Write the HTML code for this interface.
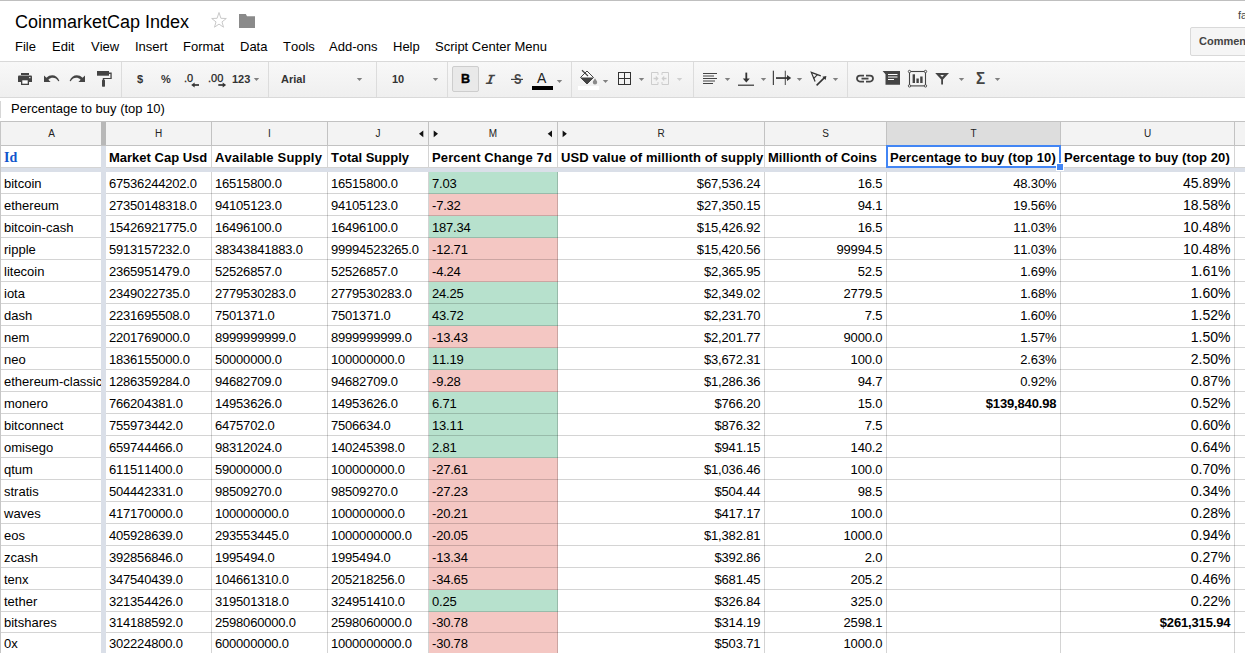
<!DOCTYPE html>
<html><head><meta charset="utf-8"><title>CoinmarketCap Index</title>
<style>
html,body{margin:0;padding:0;}
body{font-kerning:none;text-rendering:optimizeSpeed;width:1245px;height:653px;overflow:hidden;background:#fff;position:relative;font-family:"Liberation Sans",Arial,sans-serif;color:#000;}
div,span{box-sizing:border-box;}
.abs{position:absolute;}
#topline{position:absolute;left:0;top:0;width:1245px;height:1px;background:#bfbfbf;}
#title{position:absolute;left:15px;top:11px;font-size:18px;line-height:22px;white-space:nowrap;color:#000;}
.menu{position:absolute;top:39px;font-size:13px;line-height:16px;white-space:nowrap;color:#000;}
#toolbar{position:absolute;left:0;top:61px;width:1245px;height:37px;background:linear-gradient(#f8f8f8,#efefef);border-top:1px solid #d9d9d9;border-bottom:1px solid #d9d9d9;}
.sep{position:absolute;top:62px;width:1px;height:35px;background:#dcdcdc;}
.tb{position:absolute;white-space:nowrap;font-weight:bold;font-size:11px;color:#333;line-height:14px;}
.dd{position:absolute;width:0;height:0;border-left:2.6px solid transparent;border-right:2.6px solid transparent;border-top:3px solid #808080;}
#formula{position:absolute;left:11px;top:101px;font-size:13px;line-height:16px;white-space:nowrap;}
#grid{position:absolute;left:0;top:0;width:1245px;height:653px;}
.ch{position:absolute;top:122px;height:23px;background:#f3f3f3;text-align:center;font-size:10px;line-height:23px;color:#222;}
.ch.sel{background:#dddddd;}
.hc{position:absolute;top:146px;height:22px;font-size:13px;font-weight:bold;line-height:23px;padding-left:3px;white-space:nowrap;overflow:hidden;}
.hc.id{font-family:"Liberation Serif","Times New Roman",serif;color:#1155cc;font-size:14px;line-height:24px;}
.c{position:absolute;font-size:13px;white-space:nowrap;overflow:hidden;padding:0 3px;}
.c.r{text-align:right;}
.c.n{letter-spacing:-0.2px;}
.c.r{letter-spacing:-0.15px;}
.c.u{letter-spacing:0;}
.c.u{font-size:14px;}
.c.bb{letter-spacing:-0.15px;}
.c.r{padding-right:3.6px;}
.c.pos{background:#b7e1cd;}
.c.neg{background:#f4c7c3;}
.vl{position:absolute;top:122px;width:1px;height:531px;background:rgba(0,0,0,0.17);}
.hl{position:absolute;left:0;width:1245px;height:1px;background:rgba(0,0,0,0.17);}
</style></head><body>
<div id="topline"></div>
<div id="title">CoinmarketCap Index</div>
<div class="menu" style="left:15px">File</div>
<div class="menu" style="left:52px">Edit</div>
<div class="menu" style="left:91px">View</div>
<div class="menu" style="left:135px">Insert</div>
<div class="menu" style="left:183px">Format</div>
<div class="menu" style="left:240px">Data</div>
<div class="menu" style="left:283px">Tools</div>
<div class="menu" style="left:329px">Add-ons</div>
<div class="menu" style="left:393px">Help</div>
<div class="menu" style="left:435px">Script Center Menu</div>
<svg class="abs" style="left:210px;top:11px" width="18" height="18" viewBox="0 0 18 18"><path d="M9 1.5 L10.9 7.3 L16.3 7.5 L12 10.9 L13.5 16.2 L9 13.1 L4.5 16.2 L6 10.9 L1.7 7.5 L7.1 7.3 Z" fill="#fff" stroke="#c9c9c9" stroke-width="1"/></svg>
<svg class="abs" style="left:239px;top:14px" width="16" height="14" viewBox="0 0 16 14"><path d="M0 0 H6.8 L8 2.2 H16 V14 H0 Z" fill="#8a8a8a"/></svg>
<div class="abs" style="left:1238px;top:9px;font-size:11px;line-height:13px;color:#444;white-space:nowrap">fa</div>
<div class="abs" style="left:1190px;top:27px;width:80px;height:29px;border:1px solid #d9d9d9;border-radius:2px;background:#f5f5f5;font-size:11px;font-weight:bold;color:#444;line-height:27px;padding-left:8px;white-space:nowrap">Comments</div>
<div id="toolbar"></div>
<div class="sep" style="left:121px"></div>
<div class="sep" style="left:268px"></div>
<div class="sep" style="left:376px"></div>
<div class="sep" style="left:447px"></div>
<div class="sep" style="left:571px"></div>
<div class="sep" style="left:693px"></div>
<div class="sep" style="left:847px"></div>
<svg class="abs" style="left:0;top:62px" width="1245" height="34" viewBox="0 62 1245 34">
<g fill="#444">
<!-- print -->
<rect x="21" y="73" width="8" height="2"/>
<path d="M18 76.6 a1 1 0 0 1 1 -1 H31 a1 1 0 0 1 1 1 V82 H18 Z"/>
<rect x="21" y="79.5" width="8" height="5.5"/>
<rect x="22.3" y="80.3" width="5.4" height="3.4" fill="#fff"/>
<rect x="29.2" y="77" width="1.2" height="1.2" fill="#fff"/>
<!-- undo -->
<path d="M44 75.6 V82 H50.6 L48.4 79.7 C51.5 76.8 56 77.3 58.3 81.3 L59.4 80.9 C57.3 74.6 50.6 73.6 46.4 77.7 Z"/>
<!-- redo -->
<path d="M85 75.6 V82 H78.4 L80.6 79.7 C77.5 76.8 73 77.3 70.7 81.3 L69.6 80.9 C71.7 74.6 78.4 73.6 82.6 77.7 Z"/>
<!-- paint format -->
<rect x="97" y="71" width="12" height="4.7"/>
<path d="M109 72.6 H111.7 V79.1 H104.2 V80 H102.8 V77.9 H110.4 V73.9 H109 Z"/>
<rect x="102" y="79.7" width="3" height="7" rx="0.6"/>
</g>
<!-- decimal arrows -->
<g stroke="#333" stroke-width="1.7" fill="#333">
<path d="M194 85 H199" fill="none"/><path d="M191.2 85 L194.6 82.4 V87.6 Z" stroke="none"/>
<path d="M218.3 85 H223.3" fill="none"/><path d="M226.1 85 L222.7 82.4 V87.6 Z" stroke="none"/>
</g>
<!-- text color bar -->
<rect x="532" y="86" width="21" height="4" fill="#000"/>
<path d="M511 79.4 H523" stroke="#444" stroke-width="1.2"/>
<!-- fill color -->
<rect x="578" y="86" width="21" height="4" fill="#fff"/>
<path d="M587 71 L593.5 77.5 L587 84 L580.5 77.5 Z" fill="#fff" stroke="#444" stroke-width="1"/>
<path d="M580.6 77.5 H593.4 L587 84 Z" fill="#444"/>
<path d="M582 70.2 L588 76" stroke="#444" stroke-width="1.2"/>
<path d="M595 78.2 C596.4 80.3 597.2 81.3 597.2 82.3 A2.2 2.2 0 0 1 592.8 82.3 C592.8 81.3 593.6 80.3 595 78.2 Z" fill="#8a8a8a"/>
<!-- borders -->
<g stroke="#333" stroke-width="1" fill="none">
<rect x="618.5" y="72.5" width="12" height="12"/>
<path d="M624.5 72.5 V84.5 M618.5 78.5 H630.5"/>
</g>
<!-- merge (disabled) -->
<g stroke="#cdcdcd" stroke-width="1" fill="none">
<path d="M658 72.5 H651.5 V84.5 H658 M658 72.5 V75 M658 82 V84.5"/>
<path d="M662 72.5 H668.5 V84.5 H662 M662 72.5 V75 M662 82 V84.5"/>
<path d="M653.5 78.5 H656.5 M666.5 78.5 H663.5" stroke-width="1.4"/>
</g>
<path d="M655.8 75.8 L658.6 78.5 L655.8 81.2 Z M664.2 75.8 L661.4 78.5 L664.2 81.2 Z" fill="#cdcdcd"/>
<!-- align -->
<g stroke="#444" stroke-width="1" fill="none">
<path d="M703 73.5 H717 M703 76 H714 M703 78.5 H717 M703 81 H715 M703 83.5 H713"/>
</g>
<!-- valign bottom -->
<g fill="#333">
<rect x="738" y="84.6" width="16" height="1.2"/>
<rect x="745.4" y="72.6" width="1.8" height="7"/>
<path d="M742.8 78.6 H749.8 L746.3 82.4 Z"/>
</g>
<!-- wrap -->
<g fill="#333">
<rect x="772.8" y="70.7" width="1.1" height="14.3"/>
<rect x="784.8" y="70.7" width="0.9" height="14.3"/>
<rect x="776" y="77.2" width="12" height="1.7"/>
<path d="M787 75 L791.2 78 L787 81 Z"/>
</g>
<!-- rotate -->
<g stroke="#333" fill="none">
<path d="M820.8 75.9 L811.3 72.4 L815.1 81.6" stroke-width="1.2" stroke-linejoin="miter"/>
<path d="M817.5 74.7 L813.8 78.4" stroke-width="1.1"/>
<path d="M816.6 85.3 L824.5 77.7" stroke-width="1.6"/>
</g>
<path d="M826.4 75.9 L822.3 76.7 L825.6 80.1 Z" fill="#333"/>
<!-- link -->
<g stroke="#444" stroke-width="1.8" fill="none">
<path d="M864 75.6 H860 a3 3 0 0 0 0 6 H864"/>
<path d="M866 75.6 H870 a3 3 0 0 1 0 6 H866"/>
<path d="M861.5 78.6 H868.5"/>
</g>
<!-- comment -->
<path d="M882.6 71 H900 V84.8 H885.5 V74.2 Z" fill="#444"/>
<g stroke="#fff" stroke-width="1"><path d="M888 74.5 H897.5 M888 77 H897.5 M888 79.5 H894"/></g>
<!-- chart -->
<rect x="909.5" y="71.5" width="16" height="14.4" fill="none" stroke="#444" stroke-width="1.1"/>
<g fill="#f5f5f5" stroke="#444" stroke-width="0.9">
<circle cx="909.5" cy="71.5" r="1.2"/><circle cx="925.5" cy="71.5" r="1.2"/><circle cx="909.5" cy="85.9" r="1.2"/><circle cx="925.5" cy="85.9" r="1.2"/>
</g>
<g fill="#444"><rect x="912.6" y="74.3" width="2.4" height="8.7"/><rect x="916.4" y="78.5" width="2.4" height="4.5"/><rect x="920.2" y="76.5" width="2.4" height="6.5"/></g>
<!-- filter -->
<path d="M935.2 73 H949 L943 79.6 V84.6 H941.2 V79.6 Z" fill="#444"/>
<path d="M940.2 74.9 H944 L942.1 76.9 Z" fill="#f3f3f3"/>
<!-- dropdown arrows -->
<path d="M253.8 78 h5.4 l-2.7 3 z" fill="#808080"/>
<path d="M356.8 78 h5.4 l-2.7 3 z" fill="#808080"/>
<path d="M432.8 78 h5.4 l-2.7 3 z" fill="#808080"/>
<path d="M556.8 80 h5.4 l-2.7 3 z" fill="#808080"/>
<path d="M602.8 80 h5.4 l-2.7 3 z" fill="#808080"/>
<path d="M638.8 78 h5.4 l-2.7 3 z" fill="#808080"/>
<path d="M676.8 78 h5.4 l-2.7 3 z" fill="#cfcfcf"/>
<path d="M724.8 78 h5.4 l-2.7 3 z" fill="#808080"/>
<path d="M760.8 78 h5.4 l-2.7 3 z" fill="#808080"/>
<path d="M796.8 78 h5.4 l-2.7 3 z" fill="#808080"/>
<path d="M832.8 78 h5.4 l-2.7 3 z" fill="#808080"/>
<path d="M958.8 78 h5.4 l-2.7 3 z" fill="#808080"/>
<path d="M994.8 78 h5.4 l-2.7 3 z" fill="#808080"/>
</svg>
<div class="tb" style="left:137px;top:72px">$</div>
<div class="tb" style="left:161px;top:72px">%</div>
<div class="tb" style="left:184px;top:71px;font-weight:normal;color:#222;-webkit-text-stroke:0.25px #222">.0</div>
<div class="tb" style="left:208px;top:71px;font-weight:normal;color:#222;-webkit-text-stroke:0.25px #222">.00</div>
<div class="tb" style="left:232px;top:72px">123</div>
<div class="tb" style="left:281px;top:72px">Arial</div>
<div class="tb" style="left:392px;top:72px">10</div>
<div class="abs" style="left:452px;top:66px;width:27px;height:26px;border:1px solid #cdcdcd;border-radius:2px;background:#e9e9e9"></div>
<div class="abs" style="left:461px;top:71px;font-size:12.5px;font-weight:bold;line-height:16px;color:#000;-webkit-text-stroke:0.4px #000">B</div>
<div class="abs" style="left:486px;top:71.5px;font-family:'Liberation Mono',monospace;font-style:italic;font-weight:bold;font-size:14px;line-height:16px;color:#444;transform:skewX(-10deg)">I</div>
<div class="abs" style="left:513.5px;top:70.5px;font-size:14px;font-weight:bold;line-height:16px;color:#444;transform:scaleX(0.8);transform-origin:0 0">S</div>
<div class="abs" style="left:537px;top:69px;font-size:14px;line-height:18px;color:#222">A</div>
<div class="abs" style="left:976px;top:68px;font-size:16.5px;font-weight:bold;line-height:20px;color:#444;transform:scaleX(0.92);transform-origin:0 0">&Sigma;</div>


<div class="abs" style="left:0;top:101px;width:1px;height:17px;background:#d6d6d6"></div>
<div id="formula">Percentage to buy (top 10)</div>
<div id="grid">

<div class="ch" style="left:1px;width:101px">A</div>
<div class="ch" style="left:106px;width:105px">H</div>
<div class="ch" style="left:212px;width:115px">I</div>
<div class="ch" style="left:328px;width:100px">J</div>
<div class="ch" style="left:429px;width:128px">M</div>
<div class="ch" style="left:558px;width:206px">R</div>
<div class="ch" style="left:765px;width:121px">S</div>
<div class="ch sel" style="left:887px;width:173px">T</div>
<div class="ch" style="left:1061px;width:173px">U</div>
<div class="ch" style="left:1235px;width:10px"></div>
<div class="hc id" style="left:1px;width:101px">Id</div>
<div class="hc" style="left:106px;width:105px">Market Cap Usd</div>
<div class="hc" style="left:212px;width:115px;letter-spacing:0.19px">Available Supply</div>
<div class="hc" style="left:328px;width:100px">Total Supply</div>
<div class="hc" style="left:429px;width:128px;letter-spacing:0.13px">Percent Change 7d</div>
<div class="hc" style="left:558px;width:206px;letter-spacing:0.09px">USD value of millionth of supply</div>
<div class="hc" style="left:765px;width:121px">Millionth of Coins</div>
<div class="hc" style="left:887px;width:173px;letter-spacing:0.1px">Percentage to buy (top 10)</div>
<div class="hc" style="left:1061px;width:173px;letter-spacing:0.1px">Percentage to buy (top 20)</div>
<div class="c l" style="left:1px;top:172px;width:101px;height:21px;line-height:24px">bitcoin</div>
<div class="c l n" style="left:106px;top:172px;width:105px;height:21px;line-height:24px">67536244202.0</div>
<div class="c l n" style="left:212px;top:172px;width:115px;height:21px;line-height:24px">16515800.0</div>
<div class="c l n" style="left:328px;top:172px;width:100px;height:21px;line-height:24px">16515800.0</div>
<div class="c l n pos" style="left:429px;top:172px;width:129px;height:22px;line-height:24px">7.03</div>
<div class="c r m" style="left:558px;top:172px;width:206px;height:21px;line-height:24px">$67,536.24</div>
<div class="c r" style="left:765px;top:172px;width:121px;height:21px;line-height:24px">16.5</div>
<div class="c r" style="left:887px;top:172px;width:173px;height:21px;line-height:24px">48.30%</div>
<div class="c r u" style="left:1061px;top:172px;width:173px;height:21px;line-height:22px">45.89%</div>
<div class="c l" style="left:1px;top:194px;width:101px;height:21px;line-height:24px">ethereum</div>
<div class="c l n" style="left:106px;top:194px;width:105px;height:21px;line-height:24px">27350148318.0</div>
<div class="c l n" style="left:212px;top:194px;width:115px;height:21px;line-height:24px">94105123.0</div>
<div class="c l n" style="left:328px;top:194px;width:100px;height:21px;line-height:24px">94105123.0</div>
<div class="c l n neg" style="left:429px;top:194px;width:129px;height:22px;line-height:24px">-7.32</div>
<div class="c r m" style="left:558px;top:194px;width:206px;height:21px;line-height:24px">$27,350.15</div>
<div class="c r" style="left:765px;top:194px;width:121px;height:21px;line-height:24px">94.1</div>
<div class="c r" style="left:887px;top:194px;width:173px;height:21px;line-height:24px">19.56%</div>
<div class="c r u" style="left:1061px;top:194px;width:173px;height:21px;line-height:22px">18.58%</div>
<div class="c l" style="left:1px;top:216px;width:101px;height:21px;line-height:24px">bitcoin-cash</div>
<div class="c l n" style="left:106px;top:216px;width:105px;height:21px;line-height:24px">15426921775.0</div>
<div class="c l n" style="left:212px;top:216px;width:115px;height:21px;line-height:24px">16496100.0</div>
<div class="c l n" style="left:328px;top:216px;width:100px;height:21px;line-height:24px">16496100.0</div>
<div class="c l n pos" style="left:429px;top:216px;width:129px;height:22px;line-height:24px">187.34</div>
<div class="c r m" style="left:558px;top:216px;width:206px;height:21px;line-height:24px">$15,426.92</div>
<div class="c r" style="left:765px;top:216px;width:121px;height:21px;line-height:24px">16.5</div>
<div class="c r" style="left:887px;top:216px;width:173px;height:21px;line-height:24px">11.03%</div>
<div class="c r u" style="left:1061px;top:216px;width:173px;height:21px;line-height:22px">10.48%</div>
<div class="c l" style="left:1px;top:238px;width:101px;height:21px;line-height:24px">ripple</div>
<div class="c l n" style="left:106px;top:238px;width:105px;height:21px;line-height:24px">5913157232.0</div>
<div class="c l n" style="left:212px;top:238px;width:115px;height:21px;line-height:24px">38343841883.0</div>
<div class="c l n" style="left:328px;top:238px;width:100px;height:21px;line-height:24px">99994523265.0</div>
<div class="c l n neg" style="left:429px;top:238px;width:129px;height:22px;line-height:24px">-12.71</div>
<div class="c r m" style="left:558px;top:238px;width:206px;height:21px;line-height:24px">$15,420.56</div>
<div class="c r" style="left:765px;top:238px;width:121px;height:21px;line-height:24px">99994.5</div>
<div class="c r" style="left:887px;top:238px;width:173px;height:21px;line-height:24px">11.03%</div>
<div class="c r u" style="left:1061px;top:238px;width:173px;height:21px;line-height:22px">10.48%</div>
<div class="c l" style="left:1px;top:260px;width:101px;height:21px;line-height:24px">litecoin</div>
<div class="c l n" style="left:106px;top:260px;width:105px;height:21px;line-height:24px">2365951479.0</div>
<div class="c l n" style="left:212px;top:260px;width:115px;height:21px;line-height:24px">52526857.0</div>
<div class="c l n" style="left:328px;top:260px;width:100px;height:21px;line-height:24px">52526857.0</div>
<div class="c l n neg" style="left:429px;top:260px;width:129px;height:22px;line-height:24px">-4.24</div>
<div class="c r m" style="left:558px;top:260px;width:206px;height:21px;line-height:24px">$2,365.95</div>
<div class="c r" style="left:765px;top:260px;width:121px;height:21px;line-height:24px">52.5</div>
<div class="c r" style="left:887px;top:260px;width:173px;height:21px;line-height:24px">1.69%</div>
<div class="c r u" style="left:1061px;top:260px;width:173px;height:21px;line-height:22px">1.61%</div>
<div class="c l" style="left:1px;top:282px;width:101px;height:21px;line-height:24px">iota</div>
<div class="c l n" style="left:106px;top:282px;width:105px;height:21px;line-height:24px">2349022735.0</div>
<div class="c l n" style="left:212px;top:282px;width:115px;height:21px;line-height:24px">2779530283.0</div>
<div class="c l n" style="left:328px;top:282px;width:100px;height:21px;line-height:24px">2779530283.0</div>
<div class="c l n pos" style="left:429px;top:282px;width:129px;height:22px;line-height:24px">24.25</div>
<div class="c r m" style="left:558px;top:282px;width:206px;height:21px;line-height:24px">$2,349.02</div>
<div class="c r" style="left:765px;top:282px;width:121px;height:21px;line-height:24px">2779.5</div>
<div class="c r" style="left:887px;top:282px;width:173px;height:21px;line-height:24px">1.68%</div>
<div class="c r u" style="left:1061px;top:282px;width:173px;height:21px;line-height:22px">1.60%</div>
<div class="c l" style="left:1px;top:304px;width:101px;height:21px;line-height:24px">dash</div>
<div class="c l n" style="left:106px;top:304px;width:105px;height:21px;line-height:24px">2231695508.0</div>
<div class="c l n" style="left:212px;top:304px;width:115px;height:21px;line-height:24px">7501371.0</div>
<div class="c l n" style="left:328px;top:304px;width:100px;height:21px;line-height:24px">7501371.0</div>
<div class="c l n pos" style="left:429px;top:304px;width:129px;height:22px;line-height:24px">43.72</div>
<div class="c r m" style="left:558px;top:304px;width:206px;height:21px;line-height:24px">$2,231.70</div>
<div class="c r" style="left:765px;top:304px;width:121px;height:21px;line-height:24px">7.5</div>
<div class="c r" style="left:887px;top:304px;width:173px;height:21px;line-height:24px">1.60%</div>
<div class="c r u" style="left:1061px;top:304px;width:173px;height:21px;line-height:22px">1.52%</div>
<div class="c l" style="left:1px;top:326px;width:101px;height:21px;line-height:24px">nem</div>
<div class="c l n" style="left:106px;top:326px;width:105px;height:21px;line-height:24px">2201769000.0</div>
<div class="c l n" style="left:212px;top:326px;width:115px;height:21px;line-height:24px">8999999999.0</div>
<div class="c l n" style="left:328px;top:326px;width:100px;height:21px;line-height:24px">8999999999.0</div>
<div class="c l n neg" style="left:429px;top:326px;width:129px;height:22px;line-height:24px">-13.43</div>
<div class="c r m" style="left:558px;top:326px;width:206px;height:21px;line-height:24px">$2,201.77</div>
<div class="c r" style="left:765px;top:326px;width:121px;height:21px;line-height:24px">9000.0</div>
<div class="c r" style="left:887px;top:326px;width:173px;height:21px;line-height:24px">1.57%</div>
<div class="c r u" style="left:1061px;top:326px;width:173px;height:21px;line-height:22px">1.50%</div>
<div class="c l" style="left:1px;top:348px;width:101px;height:21px;line-height:24px">neo</div>
<div class="c l n" style="left:106px;top:348px;width:105px;height:21px;line-height:24px">1836155000.0</div>
<div class="c l n" style="left:212px;top:348px;width:115px;height:21px;line-height:24px">50000000.0</div>
<div class="c l n" style="left:328px;top:348px;width:100px;height:21px;line-height:24px">100000000.0</div>
<div class="c l n pos" style="left:429px;top:348px;width:129px;height:22px;line-height:24px">11.19</div>
<div class="c r m" style="left:558px;top:348px;width:206px;height:21px;line-height:24px">$3,672.31</div>
<div class="c r" style="left:765px;top:348px;width:121px;height:21px;line-height:24px">100.0</div>
<div class="c r" style="left:887px;top:348px;width:173px;height:21px;line-height:24px">2.63%</div>
<div class="c r u" style="left:1061px;top:348px;width:173px;height:21px;line-height:22px">2.50%</div>
<div class="c l" style="left:1px;top:370px;width:101px;height:21px;line-height:24px">ethereum-classic</div>
<div class="c l n" style="left:106px;top:370px;width:105px;height:21px;line-height:24px">1286359284.0</div>
<div class="c l n" style="left:212px;top:370px;width:115px;height:21px;line-height:24px">94682709.0</div>
<div class="c l n" style="left:328px;top:370px;width:100px;height:21px;line-height:24px">94682709.0</div>
<div class="c l n neg" style="left:429px;top:370px;width:129px;height:22px;line-height:24px">-9.28</div>
<div class="c r m" style="left:558px;top:370px;width:206px;height:21px;line-height:24px">$1,286.36</div>
<div class="c r" style="left:765px;top:370px;width:121px;height:21px;line-height:24px">94.7</div>
<div class="c r" style="left:887px;top:370px;width:173px;height:21px;line-height:24px">0.92%</div>
<div class="c r u" style="left:1061px;top:370px;width:173px;height:21px;line-height:22px">0.87%</div>
<div class="c l" style="left:1px;top:392px;width:101px;height:21px;line-height:24px">monero</div>
<div class="c l n" style="left:106px;top:392px;width:105px;height:21px;line-height:24px">766204381.0</div>
<div class="c l n" style="left:212px;top:392px;width:115px;height:21px;line-height:24px">14953626.0</div>
<div class="c l n" style="left:328px;top:392px;width:100px;height:21px;line-height:24px">14953626.0</div>
<div class="c l n pos" style="left:429px;top:392px;width:129px;height:22px;line-height:24px">6.71</div>
<div class="c r m" style="left:558px;top:392px;width:206px;height:21px;line-height:24px">$766.20</div>
<div class="c r" style="left:765px;top:392px;width:121px;height:21px;line-height:24px">15.0</div>
<div class="c r bb" style="left:887px;top:392px;width:173px;height:21px;line-height:24px"><b>$139,840.98</b></div>
<div class="c r u" style="left:1061px;top:392px;width:173px;height:21px;line-height:22px">0.52%</div>
<div class="c l" style="left:1px;top:414px;width:101px;height:21px;line-height:24px">bitconnect</div>
<div class="c l n" style="left:106px;top:414px;width:105px;height:21px;line-height:24px">755973442.0</div>
<div class="c l n" style="left:212px;top:414px;width:115px;height:21px;line-height:24px">6475702.0</div>
<div class="c l n" style="left:328px;top:414px;width:100px;height:21px;line-height:24px">7506634.0</div>
<div class="c l n pos" style="left:429px;top:414px;width:129px;height:22px;line-height:24px">13.11</div>
<div class="c r m" style="left:558px;top:414px;width:206px;height:21px;line-height:24px">$876.32</div>
<div class="c r" style="left:765px;top:414px;width:121px;height:21px;line-height:24px">7.5</div>
<div class="c r u" style="left:1061px;top:414px;width:173px;height:21px;line-height:22px">0.60%</div>
<div class="c l" style="left:1px;top:436px;width:101px;height:21px;line-height:24px">omisego</div>
<div class="c l n" style="left:106px;top:436px;width:105px;height:21px;line-height:24px">659744466.0</div>
<div class="c l n" style="left:212px;top:436px;width:115px;height:21px;line-height:24px">98312024.0</div>
<div class="c l n" style="left:328px;top:436px;width:100px;height:21px;line-height:24px">140245398.0</div>
<div class="c l n pos" style="left:429px;top:436px;width:129px;height:22px;line-height:24px">2.81</div>
<div class="c r m" style="left:558px;top:436px;width:206px;height:21px;line-height:24px">$941.15</div>
<div class="c r" style="left:765px;top:436px;width:121px;height:21px;line-height:24px">140.2</div>
<div class="c r u" style="left:1061px;top:436px;width:173px;height:21px;line-height:22px">0.64%</div>
<div class="c l" style="left:1px;top:458px;width:101px;height:21px;line-height:24px">qtum</div>
<div class="c l n" style="left:106px;top:458px;width:105px;height:21px;line-height:24px">611511400.0</div>
<div class="c l n" style="left:212px;top:458px;width:115px;height:21px;line-height:24px">59000000.0</div>
<div class="c l n" style="left:328px;top:458px;width:100px;height:21px;line-height:24px">100000000.0</div>
<div class="c l n neg" style="left:429px;top:458px;width:129px;height:22px;line-height:24px">-27.61</div>
<div class="c r m" style="left:558px;top:458px;width:206px;height:21px;line-height:24px">$1,036.46</div>
<div class="c r" style="left:765px;top:458px;width:121px;height:21px;line-height:24px">100.0</div>
<div class="c r u" style="left:1061px;top:458px;width:173px;height:21px;line-height:22px">0.70%</div>
<div class="c l" style="left:1px;top:480px;width:101px;height:21px;line-height:24px">stratis</div>
<div class="c l n" style="left:106px;top:480px;width:105px;height:21px;line-height:24px">504442331.0</div>
<div class="c l n" style="left:212px;top:480px;width:115px;height:21px;line-height:24px">98509270.0</div>
<div class="c l n" style="left:328px;top:480px;width:100px;height:21px;line-height:24px">98509270.0</div>
<div class="c l n neg" style="left:429px;top:480px;width:129px;height:22px;line-height:24px">-27.23</div>
<div class="c r m" style="left:558px;top:480px;width:206px;height:21px;line-height:24px">$504.44</div>
<div class="c r" style="left:765px;top:480px;width:121px;height:21px;line-height:24px">98.5</div>
<div class="c r u" style="left:1061px;top:480px;width:173px;height:21px;line-height:22px">0.34%</div>
<div class="c l" style="left:1px;top:502px;width:101px;height:21px;line-height:24px">waves</div>
<div class="c l n" style="left:106px;top:502px;width:105px;height:21px;line-height:24px">417170000.0</div>
<div class="c l n" style="left:212px;top:502px;width:115px;height:21px;line-height:24px">100000000.0</div>
<div class="c l n" style="left:328px;top:502px;width:100px;height:21px;line-height:24px">100000000.0</div>
<div class="c l n neg" style="left:429px;top:502px;width:129px;height:22px;line-height:24px">-20.21</div>
<div class="c r m" style="left:558px;top:502px;width:206px;height:21px;line-height:24px">$417.17</div>
<div class="c r" style="left:765px;top:502px;width:121px;height:21px;line-height:24px">100.0</div>
<div class="c r u" style="left:1061px;top:502px;width:173px;height:21px;line-height:22px">0.28%</div>
<div class="c l" style="left:1px;top:524px;width:101px;height:21px;line-height:24px">eos</div>
<div class="c l n" style="left:106px;top:524px;width:105px;height:21px;line-height:24px">405928639.0</div>
<div class="c l n" style="left:212px;top:524px;width:115px;height:21px;line-height:24px">293553445.0</div>
<div class="c l n" style="left:328px;top:524px;width:100px;height:21px;line-height:24px">1000000000.0</div>
<div class="c l n neg" style="left:429px;top:524px;width:129px;height:22px;line-height:24px">-20.05</div>
<div class="c r m" style="left:558px;top:524px;width:206px;height:21px;line-height:24px">$1,382.81</div>
<div class="c r" style="left:765px;top:524px;width:121px;height:21px;line-height:24px">1000.0</div>
<div class="c r u" style="left:1061px;top:524px;width:173px;height:21px;line-height:22px">0.94%</div>
<div class="c l" style="left:1px;top:546px;width:101px;height:21px;line-height:24px">zcash</div>
<div class="c l n" style="left:106px;top:546px;width:105px;height:21px;line-height:24px">392856846.0</div>
<div class="c l n" style="left:212px;top:546px;width:115px;height:21px;line-height:24px">1995494.0</div>
<div class="c l n" style="left:328px;top:546px;width:100px;height:21px;line-height:24px">1995494.0</div>
<div class="c l n neg" style="left:429px;top:546px;width:129px;height:22px;line-height:24px">-13.34</div>
<div class="c r m" style="left:558px;top:546px;width:206px;height:21px;line-height:24px">$392.86</div>
<div class="c r" style="left:765px;top:546px;width:121px;height:21px;line-height:24px">2.0</div>
<div class="c r u" style="left:1061px;top:546px;width:173px;height:21px;line-height:22px">0.27%</div>
<div class="c l" style="left:1px;top:568px;width:101px;height:21px;line-height:24px">tenx</div>
<div class="c l n" style="left:106px;top:568px;width:105px;height:21px;line-height:24px">347540439.0</div>
<div class="c l n" style="left:212px;top:568px;width:115px;height:21px;line-height:24px">104661310.0</div>
<div class="c l n" style="left:328px;top:568px;width:100px;height:21px;line-height:24px">205218256.0</div>
<div class="c l n neg" style="left:429px;top:568px;width:129px;height:22px;line-height:24px">-34.65</div>
<div class="c r m" style="left:558px;top:568px;width:206px;height:21px;line-height:24px">$681.45</div>
<div class="c r" style="left:765px;top:568px;width:121px;height:21px;line-height:24px">205.2</div>
<div class="c r u" style="left:1061px;top:568px;width:173px;height:21px;line-height:22px">0.46%</div>
<div class="c l" style="left:1px;top:590px;width:101px;height:21px;line-height:24px">tether</div>
<div class="c l n" style="left:106px;top:590px;width:105px;height:21px;line-height:24px">321354426.0</div>
<div class="c l n" style="left:212px;top:590px;width:115px;height:21px;line-height:24px">319501318.0</div>
<div class="c l n" style="left:328px;top:590px;width:100px;height:21px;line-height:24px">324951410.0</div>
<div class="c l n pos" style="left:429px;top:590px;width:129px;height:22px;line-height:24px">0.25</div>
<div class="c r m" style="left:558px;top:590px;width:206px;height:21px;line-height:24px">$326.84</div>
<div class="c r" style="left:765px;top:590px;width:121px;height:21px;line-height:24px">325.0</div>
<div class="c r u" style="left:1061px;top:590px;width:173px;height:21px;line-height:22px">0.22%</div>
<div class="c l" style="left:1px;top:612px;width:101px;height:20px;line-height:21px">bitshares</div>
<div class="c l n" style="left:106px;top:612px;width:105px;height:20px;line-height:21px">314188592.0</div>
<div class="c l n" style="left:212px;top:612px;width:115px;height:20px;line-height:21px">2598060000.0</div>
<div class="c l n" style="left:328px;top:612px;width:100px;height:20px;line-height:21px">2598060000.0</div>
<div class="c l n neg" style="left:429px;top:612px;width:129px;height:21px;line-height:21px">-30.78</div>
<div class="c r m" style="left:558px;top:612px;width:206px;height:20px;line-height:21px">$314.19</div>
<div class="c r" style="left:765px;top:612px;width:121px;height:20px;line-height:21px">2598.1</div>
<div class="c r bb" style="left:1061px;top:612px;width:173px;height:20px;line-height:21px"><b>$261,315.94</b></div>
<div class="c l" style="left:1px;top:633px;width:101px;height:20px;line-height:21px">0x</div>
<div class="c l n" style="left:106px;top:633px;width:105px;height:20px;line-height:21px">302224800.0</div>
<div class="c l n" style="left:212px;top:633px;width:115px;height:20px;line-height:21px">600000000.0</div>
<div class="c l n" style="left:328px;top:633px;width:100px;height:20px;line-height:21px">1000000000.0</div>
<div class="c l n neg" style="left:429px;top:633px;width:129px;height:21px;line-height:21px">-30.78</div>
<div class="c r m" style="left:558px;top:633px;width:206px;height:20px;line-height:21px">$503.71</div>
<div class="c r" style="left:765px;top:633px;width:121px;height:20px;line-height:21px">1000.0</div>
<div class="vl" style="left:211px"></div>
<div class="vl" style="left:211px;height:23px;background:#c2c2c2"></div>
<div class="vl" style="left:327px"></div>
<div class="vl" style="left:327px;height:23px;background:#c2c2c2"></div>
<div class="vl" style="left:428px"></div>
<div class="vl" style="left:428px;height:23px;background:#c2c2c2"></div>
<div class="vl" style="left:557px"></div>
<div class="vl" style="left:557px;height:23px;background:#c2c2c2"></div>
<div class="vl" style="left:764px"></div>
<div class="vl" style="left:764px;height:23px;background:#c2c2c2"></div>
<div class="vl" style="left:886px"></div>
<div class="vl" style="left:886px;height:23px;background:#c2c2c2"></div>
<div class="vl" style="left:1060px"></div>
<div class="vl" style="left:1060px;height:23px;background:#c2c2c2"></div>
<div class="vl" style="left:1234px"></div>
<div class="vl" style="left:1234px;height:23px;background:#c2c2c2"></div>
<div class="hl" style="top:193px"></div>
<div class="hl" style="top:215px"></div>
<div class="hl" style="top:237px"></div>
<div class="hl" style="top:259px"></div>
<div class="hl" style="top:281px"></div>
<div class="hl" style="top:303px"></div>
<div class="hl" style="top:325px"></div>
<div class="hl" style="top:347px"></div>
<div class="hl" style="top:369px"></div>
<div class="hl" style="top:391px"></div>
<div class="hl" style="top:413px"></div>
<div class="hl" style="top:435px"></div>
<div class="hl" style="top:457px"></div>
<div class="hl" style="top:479px"></div>
<div class="hl" style="top:501px"></div>
<div class="hl" style="top:523px"></div>
<div class="hl" style="top:545px"></div>
<div class="hl" style="top:567px"></div>
<div class="hl" style="top:589px"></div>
<div class="hl" style="top:611px"></div>
<div class="hl" style="top:632px"></div>
<div class="hl" style="top:653px"></div>
<div class="abs" style="left:0;top:121px;width:1245px;height:1px;background:#c2c2c2"></div>
<div class="abs" style="left:0;top:145px;width:1245px;height:1px;background:#c2c2c2"></div>
<div class="abs" style="left:0;top:167px;width:1245px;height:1px;background:#d4d4d4"></div>
<!-- freeze bars -->
<div class="abs" style="left:0;top:168px;width:1245px;height:4px;background:#dadfe8"></div>
<div class="abs" style="left:101px;top:146px;width:5px;height:507px;background:#dadfe8"></div>
<div class="abs" style="left:101px;top:122px;width:5px;height:23px;background:#b8b8b8"></div>
<div class="abs" style="left:0;top:121px;width:1px;height:532px;background:#c6c6c6"></div>
<!-- hidden-column arrows -->
<svg class="abs" style="left:415px;top:127px" width="160" height="12" viewBox="415 127 160 12">
<g fill="#111">
<path d="M423.3 130.5 V137.2 L419 133.85 Z"/>
<path d="M433.7 130.5 V137.2 L438 133.85 Z"/>
<path d="M552 130.5 V137.2 L547.7 133.85 Z"/>
<path d="M562.6 130.5 V137.2 L566.9 133.85 Z"/>
</g></svg>
<!-- selection -->
<div class="abs" style="left:886px;top:145px;width:175px;height:23px;border:2px solid #4285f4"></div>
<div class="abs" style="left:1056px;top:163px;width:8px;height:8px;background:#4285f4;border:1px solid #fff"></div>
</div>
</body></html>
